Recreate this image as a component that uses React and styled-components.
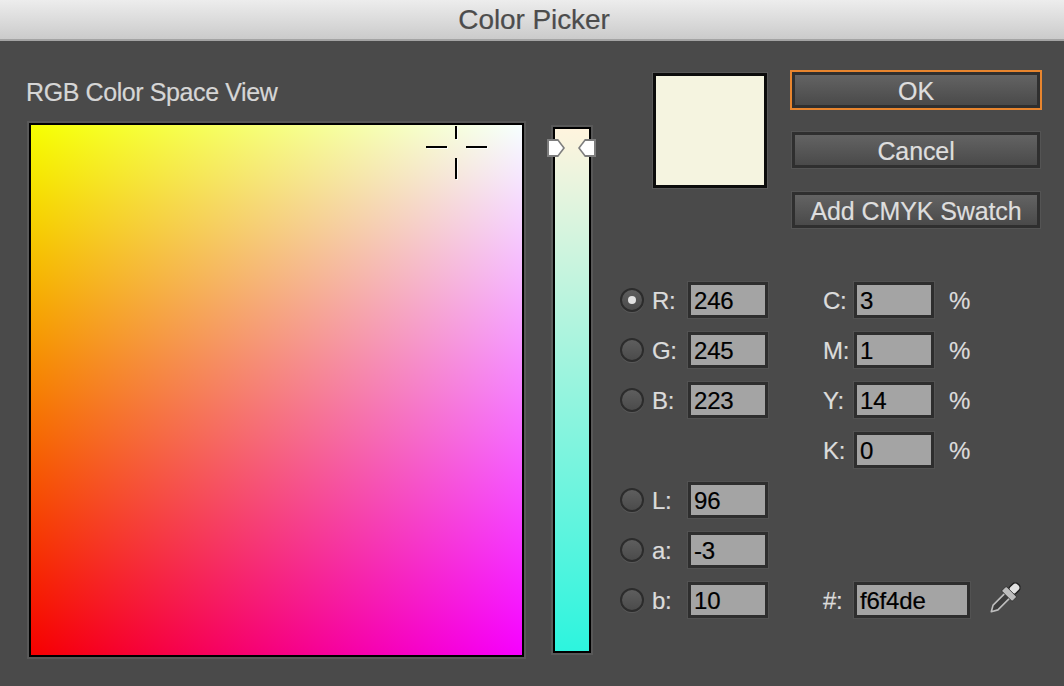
import styled, { createGlobalStyle } from 'styled-components'
import React from 'react'

const rows = [
  { radio: 'R:', value: '246', checked: true, right: { label: 'C:', value: '3', unit: '%' } },
  { radio: 'G:', value: '245', right: { label: 'M:', value: '1', unit: '%' } },
  { radio: 'B:', value: '223', right: { label: 'Y:', value: '14', unit: '%' } },
  { right: { label: 'K:', value: '0', unit: '%' } },
  { radio: 'L:', value: '96' },
  { radio: 'a:', value: '-3' },
  { radio: 'b:', value: '10', hex: true },
]

function App() {
  return (
    <Window>
      <GlobalStyle />
      <TitleBar>Color Picker</TitleBar>
      <Body>
        <SpaceColumn>
          <SpaceTitle>RGB Color Space View</SpaceTitle>
          <ColorField>
            <Crosshair>
              <CrossLine $dir="top" />
              <CrossLine $dir="bottom" />
              <CrossLine $dir="left" />
              <CrossLine $dir="right" />
            </Crosshair>
          </ColorField>
        </SpaceColumn>
        <SliderTrack>
          <SliderThumb $side="left" />
          <SliderThumb $side="right" />
        </SliderTrack>
        <SideColumn>
          <TopRow>
            <Preview />
            <Buttons>
              <Button $focused>OK</Button>
              <Button>Cancel</Button>
              <Button>Add CMYK Swatch</Button>
            </Buttons>
          </TopRow>
          <Fields>
            {rows.map((row, key) => (
              <FieldRow key={key}>
                <LeftGroup>
                  {row.radio && (
                    <>
                      <Radio $checked={row.checked} />
                      <Label>{row.radio}</Label>
                      <ValueBox>{row.value}</ValueBox>
                    </>
                  )}
                </LeftGroup>
                {row.right && (
                  <RightGroup>
                    <RightLabel>{row.right.label}</RightLabel>
                    <ValueBox>{row.right.value}</ValueBox>
                    <Unit>{row.right.unit}</Unit>
                  </RightGroup>
                )}
                {row.hex && (
                  <RightGroup>
                    <RightLabel>#:</RightLabel>
                    <HexBox>f6f4de</HexBox>
                    <Eyedropper />
                  </RightGroup>
                )}
              </FieldRow>
            ))}
          </Fields>
        </SideColumn>
      </Body>
    </Window>
  )
}

const Eyedropper = () => (
  <DropperIcon width="34" height="34" viewBox="0 0 34 34">
    <g transform="rotate(45 17 17)">
      <path d="M13.6 12 L13.6 29 L17 35 L20.4 29 L20.4 12 Z" fill="#3c3c3c" stroke="#bdbdbd" strokeWidth="1.6" strokeLinejoin="round" />
      <rect x="12.5" y="-3.5" width="9" height="11.5" rx="4" fill="#e2e2e2" stroke="#1f1f1f" strokeWidth="1.4" />
      <rect x="9.5" y="6.5" width="15" height="6.5" rx="1" fill="#bdbdbd" stroke="#2a2a2a" strokeWidth="0.8" />
    </g>
  </DropperIcon>
)

const GlobalStyle = createGlobalStyle`
  html, body {
    margin: 0;
    background: #4a4a4a;
  }
`

const Window = styled.div`
  width: 1064px;
  height: 686px;
  overflow: hidden;
  background: #4a4a4a;
  font-family: "Liberation Sans", Arial, sans-serif;
  -webkit-text-stroke: 0.2px;
`

const TitleBar = styled.div`
  height: 39px;
  padding-left: 4px;
  line-height: 40px;
  text-align: center;
  font-size: 28px;
  letter-spacing: -0.1px;
  color: #4c4c4c;
  background: linear-gradient(to bottom, #ededed, #cbcbcb);
  border-bottom: 2px solid #a4a4a4;
`

const Body = styled.div`
  display: flex;
  align-items: flex-start;
  padding: 0 0 0 29px;
`

const SpaceColumn = styled.div`
  display: flex;
  flex-direction: column;
  margin-top: 36px;
`

const SpaceTitle = styled.div`
  height: 46px;
  margin-left: -3px;
  font-size: 25px;
  line-height: 30px;
  letter-spacing: -0.4px;
  color: #d6d6d6;
`

const ColorField = styled.div`
  position: relative;
  width: 491px;
  height: 530px;
  border: 2px solid #000;
  box-shadow: 0 0 0 2px #585858;
  background: linear-gradient(to right, #000, #00f), linear-gradient(to bottom, #f6ff00, #f60000);
  background-blend-mode: screen;
`

const Crosshair = styled.div`
  position: absolute;
  left: 395px;
  top: 0;
  width: 62px;
  height: 56px;
`

const CrossLine = styled.span`
  position: absolute;
  background: #000;
  box-shadow: 1px 1px 0 rgba(255, 255, 255, 0.9);
  ${({ $dir }) => $dir === 'top' && 'left: 29px; top: 1px; width: 2px; height: 13px;'}
  ${({ $dir }) => $dir === 'bottom' && 'left: 29px; top: 33px; width: 2px; height: 21px;'}
  ${({ $dir }) => $dir === 'left' && 'left: 0; top: 21px; width: 21px; height: 2px;'}
  ${({ $dir }) => $dir === 'right' && 'left: 40px; top: 21px; width: 21px; height: 2px;'}
`

const SliderTrack = styled.div`
  position: relative;
  flex: none;
  width: 34px;
  height: 522px;
  margin: 86px 0 0 29px;
  border: 2px solid #000;
  box-shadow: 0 0 0 2px #585858;
  background: linear-gradient(to bottom, #fff4de, #2df4de);
`

const SliderThumb = styled.span`
  position: absolute;
  top: 10px;
  width: 18px;
  height: 18px;
  background: #7d7d7d;
  ${({ $side }) => $side === 'left'
    ? 'left: -8px; clip-path: polygon(0 0, 62% 0, 100% 50%, 62% 100%, 0 100%);'
    : 'right: -7px; clip-path: polygon(38% 0, 100% 0, 100% 100%, 38% 100%, 0 50%);'}

  &::after {
    content: '';
    position: absolute;
    inset: 2px;
    background: #fff;
    clip-path: inherit;
  }
`

const SideColumn = styled.div`
  display: flex;
  flex-direction: column;
  flex: none;
  margin-left: 29px;
`

const TopRow = styled.div`
  display: flex;
  align-items: flex-start;
  padding: 31px 0 0 33px;
  height: 203px;
`

const Preview = styled.div`
  flex: none;
  box-sizing: border-box;
  width: 114px;
  height: 115px;
  margin-top: 1px;
  border: 3px solid #0c0c0c;
  box-shadow: 0 0 0 1px #585858;
  background: #f5f4e0;
`

const Buttons = styled.div`
  display: flex;
  flex-direction: column;
  gap: 24px;
  margin-left: 25px;
  width: 248px;
`

const Button = styled.div`
  box-sizing: border-box;
  width: 248px;
  height: 36px;
  line-height: 32px;
  text-align: center;
  font-size: 25px;
  letter-spacing: -0.1px;
  color: #dedede;
  border: 3px solid #2f2f2f;
  background: linear-gradient(to bottom, #636363, #4a4a4a);
  box-shadow: ${({ $focused }) => ($focused ? '0 0 0 2px #e8852e' : '0 0 0 1px #545454')};
`

const Fields = styled.div`
  display: flex;
  flex-direction: column;
`

const FieldRow = styled.div`
  display: flex;
  align-items: center;
  height: 50px;
`

const LeftGroup = styled.div`
  display: flex;
  align-items: center;
  width: 203px;
  flex: none;
`

const RightGroup = styled.div`
  display: flex;
  align-items: center;
`

const Radio = styled.span`
  position: relative;
  flex: none;
  box-sizing: border-box;
  width: 24px;
  height: 24px;
  border-radius: 50%;
  border: 2px solid #2c2c2c;
  background: linear-gradient(to bottom, #5e5e5e, #4b4b4b);
  box-shadow: 0 1px 0 #5a5a5a;

  &::after {
    content: '';
    display: ${({ $checked }) => ($checked ? 'block' : 'none')};
    position: absolute;
    left: 6px;
    top: 6px;
    width: 8px;
    height: 8px;
    border-radius: 50%;
    background: #e2e2e2;
  }
`

const Label = styled.span`
  width: 36px;
  margin-left: 8px;
  padding-top: 2px;
  font-size: 24px;
  letter-spacing: -0.3px;
  color: #dcdcdc;
`

const RightLabel = styled(Label)`
  margin-left: 0;
  width: 31px;
  white-space: nowrap;
`

const ValueBox = styled.div`
  box-sizing: border-box;
  flex: none;
  width: 80px;
  height: 36px;
  padding-left: 3px;
  line-height: 32px;
  font-size: 24px;
  letter-spacing: -0.2px;
  color: #000;
  background: #a4a4a4;
  border: 3px solid #2e2e2e;
  box-shadow: 0 0 0 1px #525252;
`

const HexBox = styled(ValueBox)`
  width: 116px;
`

const Unit = styled.span`
  margin-left: 15px;
  padding-top: 2px;
  font-size: 24px;
  color: #dcdcdc;
`

const DropperIcon = styled.svg`
  flex: none;
  margin-left: 17px;
  margin-top: -2px;
  overflow: visible;
`

export default App
